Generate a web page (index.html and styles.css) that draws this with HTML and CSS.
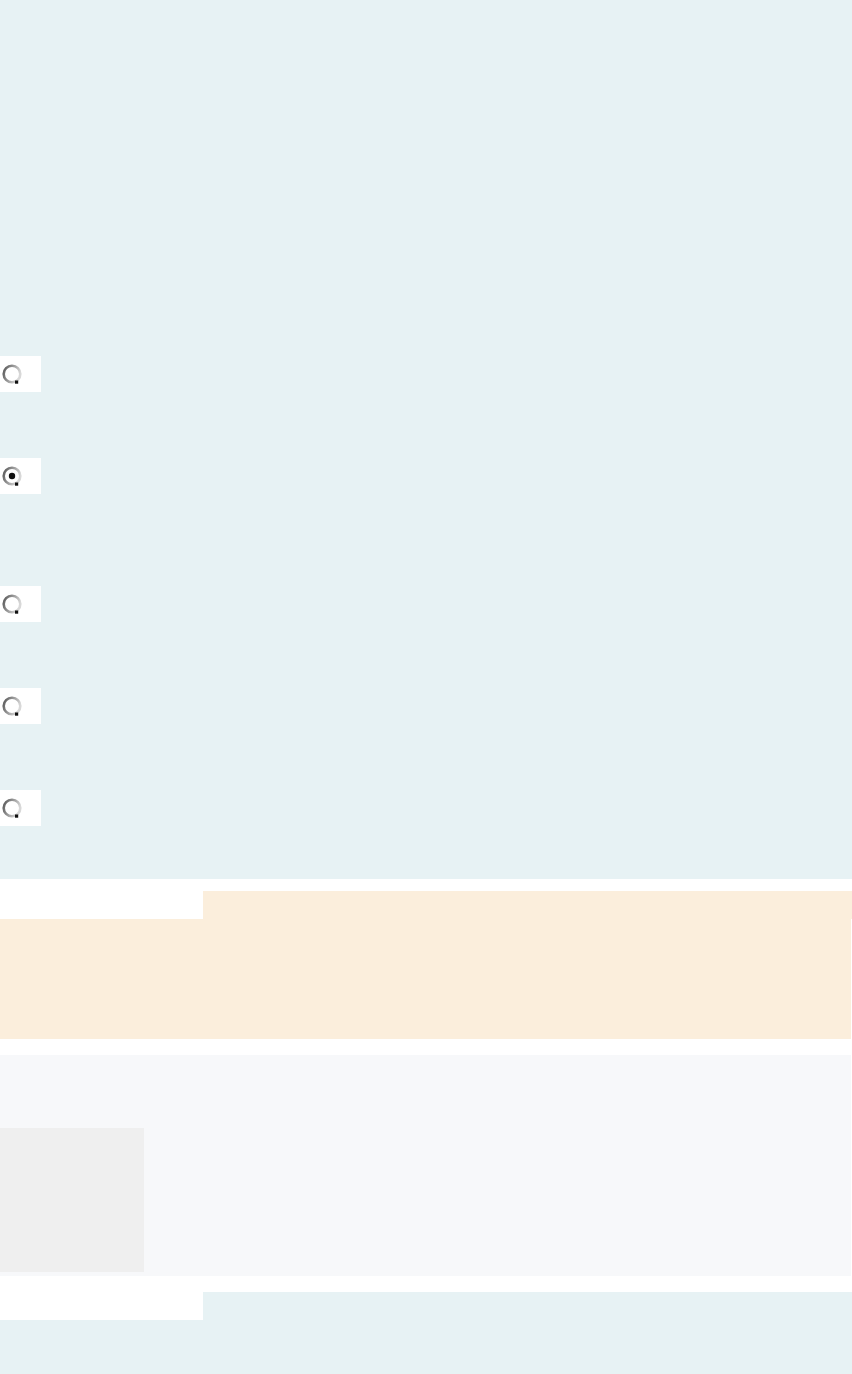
FILE: index.html
```html
<!DOCTYPE html>
<html lang="en">
<head>
    <meta charset="UTF-8">
    <meta name="viewport" content="width=device-width, initial-scale=1.0">
    <title>Quiz</title>
    <link rel="stylesheet" href="styles.css">
</head>
<body>

    <div class="quiz">
        <div class="option">
            <span class="radio-box">
                <svg class="radio" width="20" height="20" viewBox="0 0 20 20"><defs><linearGradient id="ring" x1="0" y1="0" x2="1" y2="0.4"><stop offset="0" stop-color="#555"/><stop offset="1" stop-color="#d8d8d8"/></linearGradient></defs><circle cx="10" cy="10" r="8.3" fill="#fff" stroke="url(#ring)" stroke-width="2.6"/><rect x="13" y="16.5" width="3.2" height="3.2" fill="#111"/></svg>
            </span>
        </div>
        <div class="option option-tall">
            <span class="radio-box">
                <svg class="radio" width="20" height="20" viewBox="0 0 20 20"><circle cx="10" cy="10" r="8.3" fill="#fff" stroke="url(#ring)" stroke-width="2.6"/><rect x="13" y="16.5" width="3.2" height="3.2" fill="#111"/><circle cx="10" cy="10" r="3.2" fill="#111"/></svg>
            </span>
        </div>
        <div class="option">
            <span class="radio-box">
                <svg class="radio" width="20" height="20" viewBox="0 0 20 20"><circle cx="10" cy="10" r="8.3" fill="#fff" stroke="url(#ring)" stroke-width="2.6"/><rect x="13" y="16.5" width="3.2" height="3.2" fill="#111"/></svg>
            </span>
        </div>
        <div class="option">
            <span class="radio-box">
                <svg class="radio" width="20" height="20" viewBox="0 0 20 20"><circle cx="10" cy="10" r="8.3" fill="#fff" stroke="url(#ring)" stroke-width="2.6"/><rect x="13" y="16.5" width="3.2" height="3.2" fill="#111"/></svg>
            </span>
        </div>
        <div class="option">
            <span class="radio-box">
                <svg class="radio" width="20" height="20" viewBox="0 0 20 20"><circle cx="10" cy="10" r="8.3" fill="#fff" stroke="url(#ring)" stroke-width="2.6"/><rect x="13" y="16.5" width="3.2" height="3.2" fill="#111"/></svg>
            </span>
        </div>
    </div>

    <div class="note">
        <div class="tab-row">
            <div class="tab-spacer"></div>
            <div class="tab note-tab"></div>
        </div>
        <div class="note-body"></div>
    </div>

    <div class="panel">
        <div class="thumb"></div>
    </div>

    <div class="footer">
        <div class="tab-row">
            <div class="tab-spacer"></div>
            <div class="tab footer-tab"></div>
        </div>
        <div class="footer-body"></div>
    </div>

</body>
</html>
```

FILE: styles.css
```css
body {
    margin: 0;
    font-family: "Liberation Sans", sans-serif;
    background-color: #fff;
}

.quiz {
    background-color: #e7f2f4;
    padding: 356px 0 53px;
    display: flex;
    flex-direction: column;
    gap: 66px;
}

.option-tall {
    margin-bottom: 26px;
}

.radio-box {
    display: flex;
    align-items: center;
    width: 41px;
    height: 36px;
    padding-left: 2px;
    box-sizing: border-box;
    background-color: #fff;
}

.radio {
    display: block;
}

.note {
    margin-top: 12px;
}

.tab-row {
    display: flex;
    height: 28px;
}

.tab-spacer {
    width: 203px;
}

.tab {
    flex: 1;
}

.note-tab,
.note-body {
    background-color: #fbeedc;
}

.note-body {
    height: 120px;
    margin-right: 1px;
}

.panel {
    margin: 16px 1px 16px 0;
    height: 221px;
    background-color: #f7f8fa;
    padding-top: 73px;
    box-sizing: border-box;
}

.thumb {
    width: 144px;
    height: 144px;
    background-color: #efefef;
}

.footer-tab,
.footer-body {
    background-color: #e7f2f4;
}

.footer-body {
    height: 60px;
}
```
